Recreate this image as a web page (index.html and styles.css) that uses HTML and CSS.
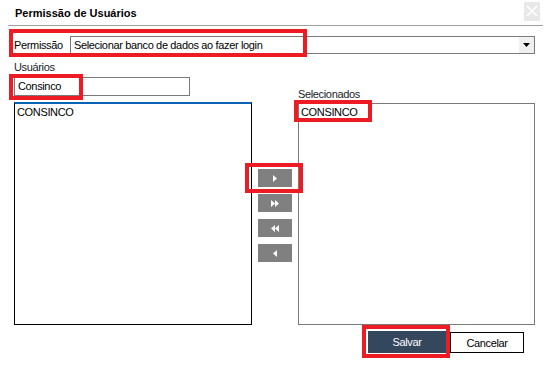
FILE: index.html
```html
<!DOCTYPE html>
<html lang="pt-BR">
<head>
  <meta charset="UTF-8">
  <title>Permissão de Usuários</title>
  <link rel="stylesheet" href="styles.css">
</head>
<body>
  <div class="dialog">
    <div class="title-bar">
      <h1 class="title">Permissão de Usuários</h1>
      <span class="close-btn">
        <svg width="12" height="12" viewBox="0 0 12 12"><path d="M1 1L11 11M11 1L1 11" stroke="#fff" stroke-width="1.5"/></svg>
      </span>
    </div>

    <div class="perm-row">
      <label class="perm-label">Permissão</label>
      <div class="select">
        <span class="select-text">Selecionar banco de dados ao fazer login</span>
        <span class="select-arrow">
          <svg width="7" height="4" viewBox="0 0 7 4"><path d="M0 0H7L3.5 4Z" fill="#000"/></svg>
        </span>
      </div>
    </div>

    <div class="lists">
      <div class="col-left">
        <div class="field-label">Usuários</div>
        <div class="textbox">Consinco</div>
        <div class="listbox listbox-active">
          <div class="list-item">CONSINCO</div>
        </div>
      </div>

      <div class="col-mid">
        <button class="move-btn">
          <svg width="4" height="7" viewBox="0 0 4 7"><path d="M0 0L4 3.5L0 7Z" fill="#fff"/></svg>
        </button>
        <button class="move-btn">
          <svg width="8" height="7" viewBox="0 0 8 7"><path d="M0 0L4 3.5L0 7ZM4 0L8 3.5L4 7Z" fill="#fff"/></svg>
        </button>
        <button class="move-btn">
          <svg width="8" height="7" viewBox="0 0 8 7"><path d="M4 0L0 3.5L4 7ZM8 0L4 3.5L8 7Z" fill="#fff"/></svg>
        </button>
        <button class="move-btn">
          <svg width="4" height="7" viewBox="0 0 4 7"><path d="M4 0L0 3.5L4 7Z" fill="#fff"/></svg>
        </button>
      </div>

      <div class="col-right">
        <div class="field-label sel-label">Selecionados</div>
        <div class="listbox">
          <div class="list-item">CONSINCO</div>
        </div>
      </div>
    </div>

    <div class="actions">
      <button class="btn btn-save">Salvar</button>
      <button class="btn btn-cancel">Cancelar</button>
    </div>

    <!-- red annotation boxes -->
    <div class="mark mark-perm"></div>
    <div class="mark mark-user"></div>
    <div class="mark mark-add"></div>
    <div class="mark mark-sel"></div>
    <div class="mark mark-save"></div>
  </div>
</body>
</html>
```

FILE: styles.css
```css
body {
  margin: 0;
  background-color: #fff;
  font-family: "Liberation Sans", Arial, sans-serif;
  font-size: 11px;
  letter-spacing: -0.35px;
  color: #000;
}

.dialog {
  position: relative;
  width: 546px;
  height: 365px;
}

.title-bar {
  height: 25px;
  margin-left: 8px;
  margin-right: 3px;
  border-bottom: 1px solid #a0a0a0;
  display: flex;
  align-items: center;
  justify-content: space-between;
}

.title {
  margin: 0 0 0 7px;
  font-size: 11px;
  font-weight: bold;
  letter-spacing: 0;
}

.close-btn {
  width: 16px;
  height: 19px;
  margin-right: 3px;
  margin-top: -3px;
  background-color: #e8e8e8;
  display: flex;
  align-items: center;
  justify-content: center;
}

.perm-row {
  display: flex;
  align-items: center;
  margin: 10px 11px 0 14px;
}

.perm-label {
  width: 56px;
}

.select {
  flex: 1;
  height: 18px;
  box-sizing: border-box;
  border: 1px solid #7a7a7a;
  display: flex;
  align-items: center;
}

.select-text {
  flex: 1;
  padding-left: 3px;
}

.select-arrow {
  width: 15px;
  height: 100%;
  background-color: #f0f0f0;
  display: flex;
  align-items: center;
  justify-content: center;
}

.lists {
  display: grid;
  grid-template-columns: 238px 46px 237px;
  margin: 6px 0 0 14px;
}

.col-left,
.col-right {
  display: flex;
  flex-direction: column;
  justify-content: flex-end;
}

.field-label {
  height: 14px;
  line-height: 14px;
  color: #1a1a2a;
}

.sel-label {
  margin-bottom: 2px;
}

.textbox {
  width: 176px;
  height: 19px;
  box-sizing: border-box;
  border: 1px solid #7a7a7a;
  padding-left: 3px;
  line-height: 17px;
  margin: 3px 0 6px;
}

.listbox {
  height: 222px;
  box-sizing: border-box;
  border: 1px solid #7a7a7a;
  padding: 1px 2px;
}

.listbox-active {
  height: 223px;
  border-color: #000;
  border-top: 2px solid #0b63b5;
}

.list-item {
  line-height: 14px;
}

.col-mid {
  display: flex;
  flex-direction: column;
  align-items: center;
  gap: 7px;
  padding-top: 109px;
}

.move-btn {
  width: 34px;
  height: 18px;
  border: none;
  padding: 0;
  background-color: #808080;
  display: flex;
  align-items: center;
  justify-content: center;
}

.actions {
  display: flex;
  justify-content: flex-end;
  margin: 6px 22px 0 0;
}

.btn {
  height: 22px;
  font-family: inherit;
  font-size: 11px;
  letter-spacing: inherit;
  padding: 0;
}

.btn-save {
  width: 78px;
  border: none;
  background-color: #34475d;
  color: #fff;
  margin-right: 4px;
}

.btn-cancel {
  width: 74px;
  border: 1px solid #000;
  background-color: #fff;
  color: #000;
  margin-top: 1px;
  height: 21px;
}

.mark {
  position: absolute;
  box-sizing: border-box;
  border: 4px solid #ed1c24;
}

.mark-perm {
  left: 9px;
  top: 29px;
  width: 298px;
  height: 28px;
}

.mark-user {
  left: 9px;
  top: 74px;
  width: 74px;
  height: 26px;
}

.mark-add {
  left: 245px;
  top: 163px;
  width: 58px;
  height: 30px;
}

.mark-sel {
  left: 294px;
  top: 100px;
  width: 78px;
  height: 22px;
}

.mark-save {
  left: 362px;
  top: 325px;
  width: 88px;
  height: 33px;
}
```
